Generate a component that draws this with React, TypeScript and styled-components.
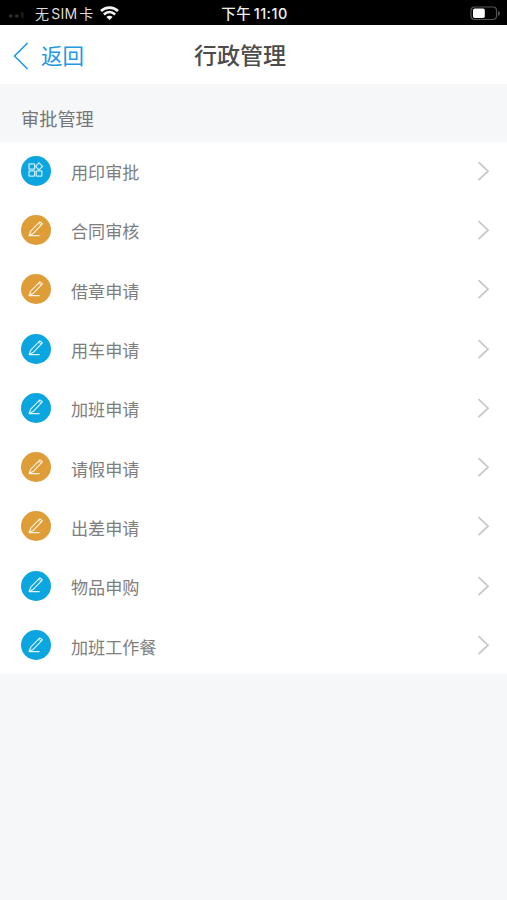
import React from 'react';
import styled, { createGlobalStyle } from 'styled-components';

const GlobalStyle = createGlobalStyle`
  * { box-sizing: border-box; }
  body {
    margin: 0;
    background: #f5f7f9;
    font-family: Inter, "Noto Sans CJK SC", sans-serif;
  }
`;

const Screen = styled.div`
  width: 100%;
  min-height: 900px;
  background: #f5f7f9;
`;

const StatusBar = styled.div`
  display: grid;
  grid-template-columns: 1fr auto 1fr;
  align-items: center;
  height: 25px;
  padding: 2px 6px 0 8px;
  background: #000;
  color: #dcdcdc;
  font-size: 14px;
  line-height: 22px;
`;

const Carrier = styled.div`
  display: flex;
  align-items: center;
`;

const CarrierName = styled.span`
  margin: 0 6px 0 10px;
  letter-spacing: 0.35px;
  word-spacing: -2.5px;
  white-space: nowrap;
`;

const Clock = styled.div`
  color: #f0f0f0;
  font-weight: 500;
  font-size: 14.4px;
  letter-spacing: 0.5px;
  word-spacing: -1.7px;
  white-space: nowrap;
`;

const Power = styled.div`
  display: flex;
  justify-content: flex-end;
`;

const NavBar = styled.header`
  display: grid;
  grid-template-columns: 120px 1fr 147px;
  align-items: center;
  height: 59px;
  background: #fff;
`;

const Back = styled.a`
  display: flex;
  align-items: center;
  gap: 12px;
  padding: 2px 0 0 13px;
  color: #2498e4;
  font-size: 21.5px;
  line-height: 30px;
`;

const Title = styled.h1`
  margin: 3px 0 0;
  color: #4c4c4c;
  font-size: 23px;
  font-weight: 500;
  line-height: 32px;
  text-align: center;
`;

const SectionTitle = styled.h2`
  height: 58px;
  margin: 0;
  padding: 21px 21px 0;
  color: #757678;
  font-size: 18.2px;
  font-weight: 400;
  line-height: 28px;
`;

const List = styled.ul`
  margin: 0;
  padding: 0 17px 0 21px;
  height: 532px;
  list-style: none;
  background: #fff;
`;

const Row = styled.li`
  display: flex;
  align-items: center;
  height: 59.3px;
  padding-bottom: 2px;
`;

const Badge = styled.span<{ $color: string }>`
  display: flex;
  align-items: center;
  justify-content: center;
  width: 30px;
  height: 30px;
  border-radius: 50%;
  background: ${({ $color }) => $color};
`;

const Label = styled.span`
  flex: 1;
  padding: 5px 0 0 20px;
  color: #7e7e7e;
  font-size: 17.1px;
  line-height: 26px;
`;

const BLUE = '#0ba5df';
const ORANGE = '#df9d37';

const items = [
  { label: '用印审批', color: BLUE, icon: 'grid' },
  { label: '合同审核', color: ORANGE, icon: 'pen' },
  { label: '借章申请', color: ORANGE, icon: 'pen' },
  { label: '用车申请', color: BLUE, icon: 'pen' },
  { label: '加班申请', color: BLUE, icon: 'pen' },
  { label: '请假申请', color: ORANGE, icon: 'pen' },
  { label: '出差申请', color: ORANGE, icon: 'pen' },
  { label: '物品申购', color: BLUE, icon: 'pen' },
  { label: '加班工作餐', color: BLUE, icon: 'pen' },
];

const SignalIcon = () => (
  <svg width="17" height="12" viewBox="0 0 17 12" fill="#303030">
    <rect x="1" y="6.5" width="3.5" height="3" rx="1" />
    <rect x="7" y="6.5" width="3.5" height="3" rx="1" />
    <rect x="13" y="4" width="2.5" height="6" rx="1" fill="#1c1c1c" />
  </svg>
);

const WifiIcon = () => (
  <svg width="19" height="15" viewBox="0 0 19 15" fill="none" stroke="#f4f4f4" strokeWidth="2.7">
    <path d="M1 5C5.8 .4 13.2 .4 18 5" />
    <path d="M3.9 8.5C7.2 5.4 11.8 5.4 15.1 8.5" />
    <path d="M6.3 10.9C8.2 9.2 10.8 9.2 12.7 10.9L9.5 14Z" fill="#f4f4f4" stroke="none" />
  </svg>
);

const BatteryIcon = () => (
  <svg width="31" height="15" viewBox="0 0 31 15">
    <rect x="1" y="1" width="25.5" height="12.5" rx="3.5" fill="none" stroke="#555" strokeWidth="1.2" />
    <rect x="3" y="2.6" width="11.8" height="9.4" rx="1.8" fill="#fff" />
    <path d="M28 5v5c2.5-1 2.5-4 0-5" fill="#555" />
  </svg>
);

const BackIcon = () => (
  <svg width="16" height="28" viewBox="0 0 16 28" fill="none" stroke="#2498e4" strokeWidth="1.6">
    <path d="M14.5 1 1.5 14l13 13" />
  </svg>
);

const ChevronIcon = () => (
  <svg width="13" height="20" viewBox="0 0 13 20" fill="none" stroke="#c8c8c8" strokeWidth="1.8">
    <path d="m1.5 1.2 9.5 9-9.5 9" />
  </svg>
);

const GridIcon = () => (
  <svg width="16" height="18" viewBox="0 0 16 18" fill="none" stroke="#c5edfa" strokeWidth="1.3">
    <rect x="1" y="1.8" width="5.6" height="5.4" rx=".7" />
    <rect x="1" y="8.8" width="5.6" height="5.4" rx=".7" />
    <rect x="8.2" y="8.8" width="5.6" height="5.4" rx=".7" />
    <path d="m11 .9 3.5 3.5L11 7.9 7.5 4.4Z" />
  </svg>
);

const PenIcon = () => (
  <svg width="16" height="17" viewBox="0 0 16 17" fill="none" stroke="#fff" strokeOpacity=".88" strokeWidth="1.1" strokeLinecap="round" strokeLinejoin="round">
    <path d="m1.2 14.2 1.5-4L11.9.9l2.4 1.9L5.1 12.6Z" />
    <path d="m10.6 2.2 2.4 2" strokeWidth=".9" />
    <path d="M1.2 14.6h10" />
  </svg>
);

export default function App() {
  return (
    <Screen>
      <GlobalStyle />
      <StatusBar>
        <Carrier>
          <SignalIcon />
          <CarrierName>无 SIM 卡</CarrierName>
          <WifiIcon />
        </Carrier>
        <Clock>下午 11:10</Clock>
        <Power><BatteryIcon /></Power>
      </StatusBar>
      <NavBar>
        <Back><BackIcon />返回</Back>
        <Title>行政管理</Title>
      </NavBar>
      <SectionTitle>审批管理</SectionTitle>
      <List>
        {items.map((item) => (
          <Row key={item.label}>
            <Badge $color={item.color}>{item.icon === 'grid' ? <GridIcon /> : <PenIcon />}</Badge>
            <Label>{item.label}</Label>
            <ChevronIcon />
          </Row>
        ))}
      </List>
    </Screen>
  );
}
